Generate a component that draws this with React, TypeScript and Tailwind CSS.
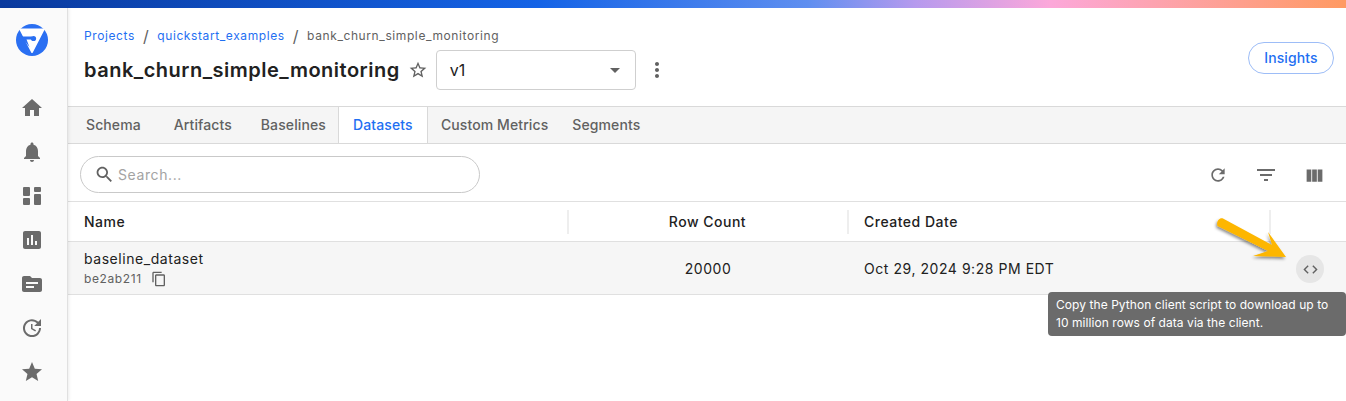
import React from 'react'

const icons = {
  home: 'M10 20v-6h4v6h5v-8h3L12 3 2 12h3v8z',
  bell: 'M12 22c1.1 0 2-.9 2-2h-4c0 1.1.89 2 2 2zm6-6v-5c0-3.07-1.64-5.64-4.5-6.32V4c0-.83-.67-1.5-1.5-1.5s-1.5.67-1.5 1.5v.68C7.63 5.36 6 7.92 6 11v5l-2 2v1h16v-1l-2-2z',
  dashboard:
    'M4 3h5a1 1 0 0 1 1 1v7a1 1 0 0 1-1 1H4a1 1 0 0 1-1-1V4a1 1 0 0 1 1-1zm11 0h5a1 1 0 0 1 1 1v3a1 1 0 0 1-1 1h-5a1 1 0 0 1-1-1V4a1 1 0 0 1 1-1zm0 7h5a1 1 0 0 1 1 1v9a1 1 0 0 1-1 1h-5a1 1 0 0 1-1-1v-9a1 1 0 0 1 1-1zM4 14h5a1 1 0 0 1 1 1v5a1 1 0 0 1-1 1H4a1 1 0 0 1-1-1v-5a1 1 0 0 1 1-1z',
  chart: 'M19 3H5c-1.1 0-2 .9-2 2v14c0 1.1.9 2 2 2h14c1.1 0 2-.9 2-2V5c0-1.1-.9-2-2-2zM9 17H7v-7h2v7zm4 0h-2V7h2v10zm4 0h-2v-4h2v4z',
  folder: 'M20 6h-8l-2-2H4c-1.1 0-1.99.9-1.99 2L2 18c0 1.1.9 2 2 2h16c1.1 0 2-.9 2-2V8c0-1.1-.9-2-2-2zm-6 10H6v-2h8v2zm4-4H6v-2h12v2z',
  update: 'M21 10.12h-6.78l2.74-2.82c-2.73-2.7-7.15-2.8-9.88-.1-2.73 2.71-2.73 7.08 0 9.79s7.15 2.71 9.88 0C18.32 15.65 19 14.08 19 12.1h2c0 1.98-.88 4.55-2.64 6.29-3.51 3.48-9.21 3.48-12.72 0-3.5-3.47-3.53-9.11-.02-12.58s9.14-3.47 12.65 0L21 3v7.12zM12.5 8v4.25l3.5 2.08-.72 1.21L11 13V8h1.5z',
  star: 'M12 17.27L18.18 21l-1.64-7.03L22 9.24l-7.19-.61L12 2 9.19 8.63 2 9.24l5.46 4.73L5.82 21z',
  starBorder:
    'M22 9.24l-7.19-.62L12 2 9.19 8.63 2 9.24l5.46 4.73L5.82 21 12 17.27 18.18 21l-1.63-7.03L22 9.24zM12 15.4l-3.76 2.27 1-4.28-3.32-2.88 4.38-.38L12 6.1l1.71 4.04 4.38.38-3.32 2.88 1 4.28L12 15.4z',
  more: 'M12 8c1.1 0 2-.9 2-2s-.9-2-2-2-2 .9-2 2 .9 2 2 2zm0 2c-1.1 0-2 .9-2 2s.9 2 2 2 2-.9 2-2-.9-2-2-2zm0 6c-1.1 0-2 .9-2 2s.9 2 2 2 2-.9 2-2-.9-2-2-2z',
  search:
    'M15.5 14h-.79l-.28-.27C15.41 12.59 16 11.11 16 9.5 16 5.91 13.09 3 9.5 3S3 5.91 3 9.5 5.91 16 9.5 16c1.61 0 3.09-.59 4.23-1.57l.27.28v.79l5 4.99L20.49 19l-4.99-5zm-6 0C7.01 14 5 11.99 5 9.5S7.01 5 9.5 5 14 7.01 14 9.5 11.99 14 9.5 14z',
  refresh:
    'M17.65 6.35C16.2 4.9 14.21 4 12 4c-4.42 0-7.99 3.58-7.99 8s3.57 8 7.99 8c3.73 0 6.84-2.55 7.73-6h-2.08c-.82 2.33-3.04 4-5.65 4-3.31 0-6-2.69-6-6s2.69-6 6-6c1.66 0 3.14.69 4.22 1.78L13 11h7V4l-2.35 2.35z',
  filter: 'M10 18h4v-2h-4v2zM3 6v2h18V6H3zm3 7h12v-2H6v2z',
  columns: 'M14.67 5v14H9.33V5h5.34zm1 14H21V5h-5.33v14zm-7.34 0V5H3v14h5.33z',
  copy: 'M16 1H4c-1.1 0-2 .9-2 2v14h2V3h12V1zm3 4H8c-1.1 0-2 .9-2 2v14c0 1.1.9 2 2 2h11c1.1 0 2-.9 2-2V7c0-1.1-.9-2-2-2zm0 16H8V7h11v14z',
  code: 'M9.4 16.6L4.8 12l4.6-4.6L8 6l-6 6 6 6 1.4-1.4zm5.2 0l4.6-4.6-4.6-4.6L16 6l6 6-6 6-1.4-1.4z',
}

function Icon({ d, className }: { d: string; className: string }) {
  return (
    <svg viewBox="0 0 24 24" fill="currentColor" className={className}>
      <path d={d} />
    </svg>
  )
}

const navItems = [icons.home, icons.bell, icons.dashboard, icons.chart, icons.folder, icons.update, icons.star]

const tabs = [
  { label: 'Schema', className: 'ml-[18px]' },
  { label: 'Artifacts', className: 'ml-[33px]' },
  { label: 'Baselines', className: 'ml-[29px]' },
  { label: 'Datasets', className: 'ml-3 w-[90px] justify-center h-9 bg-white border-x border-[#d9d9d9] text-[#1f6ff2]' },
  { label: 'Custom Metrics', className: 'ml-[13px]' },
  { label: 'Segments', className: 'ml-6' },
]

function Logo() {
  return (
    <svg viewBox="0 0 32 32" className="w-8 h-8">
      <circle cx="16" cy="16" r="16" fill="#2a6ff2" />
      <path d="M4.5 4.500h23a1 1 0 0 1 .9 1.500L16.800 28.500a1 1 0 0 1-1.600 0L3.600 6a1 1 0 0 1 .9-1.500z" fill="#fff" />
      <path d="M5 12.500H16V15.500H10.500L13.500 23z" fill="#2a6ff2" />
      <circle cx="17.500" cy="14.500" r="2.600" fill="#2a6ff2" />
    </svg>
  )
}

function Sidebar() {
  return (
    <aside className="w-[68px] shrink-0 bg-[#fafafa] border-r border-[#e0e0e0] shadow-[1px_0_3px_rgba(0,0,0,0.08)] flex flex-col items-center z-10">
      <div className="mt-4 ml-[-4px]">
        <Logo />
      </div>
      <div className="mt-10 flex flex-col gap-5 ml-[-4px]">
        {navItems.map((d) => (
          <Icon key={d} d={d} className="w-6 h-6 text-[#6b6b6b]" />
        ))}
      </div>
    </aside>
  )
}

export default function App() {
  return (
    <div className="relative w-[1346px] h-[401px] overflow-hidden bg-white text-[#212121] font-['Inter','Noto_Sans',sans-serif]">
      <div className="h-2 bg-[linear-gradient(90deg,#0a3a9e_0%,#1463e6_40%,#5f8ff0_60%,#b69aee_68%,#fca8da_78%,#ff9a62_100%)]" />
      <div className="flex h-[393px]">
        <Sidebar />
        <main className="flex-1 min-w-0">
          <header className="h-[99px] border-b border-[#d9d9d9] pl-4 pr-3 flex justify-between">
            <div>
              <nav className="flex items-center h-[20px] mt-[18px] text-xs tracking-[0.6px]">
                <span className="text-[#1f6ff2]">Projects</span>
                <span className="mx-2 text-[#616161] text-base">/</span>
                <span className="text-[#1f6ff2]">quickstart_examples</span>
                <span className="mx-2 text-[#616161] text-base">/</span>
                <span className="text-[#616161]">bank_churn_simple_monitoring</span>
              </nav>
              <div className="flex items-center mt-[4px]">
                <h1 className="text-xl font-semibold tracking-[0.5px] leading-10">bank_churn_simple_monitoring</h1>
                <Icon d={icons.starBorder} className="w-5 h-5 ml-2 text-[#616161]" />
                <div className="ml-2 w-[200px] h-10 border border-[#cfcfcf] rounded flex items-center justify-between pl-[13px] pr-[15px] text-base">
                  <span>v1</span>
                  <span className="w-0 h-0 border-x-[5px] border-x-transparent border-t-[5px] border-t-[#616161]" />
                </div>
                <Icon d={icons.more} className="w-6 h-6 ml-[9px] text-[#616161]" />
              </div>
            </div>
            <button className="mt-[34px] w-[86px] h-8 rounded-full border border-[#9dbdf7] text-sm font-medium tracking-[0.1px] text-[#1f6ff2]">
              Insights
            </button>
          </header>

          <div className="h-[37px] bg-[#f5f5f5] border-b border-[#d9d9d9] flex text-sm font-medium tracking-[0.1px] text-[#616161]">
            {tabs.map((tab) => (
              <div key={tab.label} className={`flex items-center ${tab.className}`}>
                {tab.label}
              </div>
            ))}
          </div>

          <div className="h-[58px] border-b border-[#e0e0e0] flex items-center justify-between pl-3 pr-2">
            <div className="w-[400px] h-[37px] mt-1 rounded-full border border-[#c9c9c9] flex items-center pl-[13px] gap-[3px] text-sm text-[#a3a3a3] tracking-[0.6px]">
              <Icon d={icons.search} className="w-[21px] h-[21px] text-[#616161]" />
              Search...
            </div>
            <div className="flex items-center mt-[5px] text-[#6b6b6b]">
              <div className="w-12 flex justify-center">
                <Icon d={icons.refresh} className="w-5 h-5" />
              </div>
              <div className="w-12 flex justify-center">
                <Icon d={icons.filter} className="w-6 h-6" />
              </div>
              <div className="w-12 flex justify-center">
                <Icon d={icons.columns} className="w-[21px] h-[21px]" />
              </div>
            </div>
          </div>

          <div className="h-10 border-b border-[#e0e0e0] grid grid-cols-[501px_280px_422px_1fr] items-center text-sm font-medium tracking-[0.5px]">
            <div className="pl-4 h-6 flex items-center border-r-2 border-[#eeeeee]">Name</div>
            <div className="text-center h-6 flex items-center justify-center pr-px border-r-2 border-[#eeeeee]">Row Count</div>
            <div className="pl-[15px] h-6 flex items-center border-r-2 border-[#eeeeee]">Created Date</div>
            <div />
          </div>

          <div className="h-[53px] bg-[#f6f6f6] border-b border-[#e0e0e0] grid grid-cols-[501px_280px_422px_1fr] items-center text-sm tracking-[0.55px]">
            <div className="pl-4">
              <div className="leading-[18px]">baseline_dataset</div>
              <div className="flex items-center gap-[9px] text-xs tracking-[0.6px] text-[#616161] leading-4 mt-[3px]">
                be2ab211
                <Icon d={icons.copy} className="w-4 h-4" />
              </div>
            </div>
            <div className="text-center pr-[2px] mt-[2px]">20000</div>
            <div className="pl-[15px] mt-[2px]">Oct 29, 2024 9:28 PM EDT</div>
            <div className="flex justify-end pr-[22px] mt-[2px]">
              <div className="w-7 h-7 rounded-full bg-[#e6e6e6] flex items-center justify-center">
                <Icon d={icons.code} className="w-[17px] h-[17px] text-[#616161]" />
              </div>
            </div>
          </div>
        </main>
      </div>

      {/* callout arrow */}
      <svg viewBox="0 0 1346 401" className="absolute inset-0 w-[1346px] h-[401px] pointer-events-none">
        <defs>
          <filter id="arrow-shadow" x="-20%" y="-20%" width="150%" height="150%">
            <feDropShadow dx="-1" dy="2" stdDeviation="1.5" floodColor="#000" floodOpacity="0.45" />
          </filter>
        </defs>
        <path
          d="M1217.5 226 C1216 222 1219 217.500 1223 218.500 L1272 245 L1268 232 L1286 257 L1253 256 L1268 251 Z"
          fill="#fdb600"
          filter="url(#arrow-shadow)"
        />
      </svg>

      <div className="absolute left-[1048px] top-[292px] w-[298px] h-11 rounded bg-[#6b6b6b] text-white text-xs tracking-[0.06px] leading-[18px] pl-2 py-1">
        Copy the Python client script to download up to
        <br />
        10 million rows of data via the client.
      </div>
    </div>
  )
}
